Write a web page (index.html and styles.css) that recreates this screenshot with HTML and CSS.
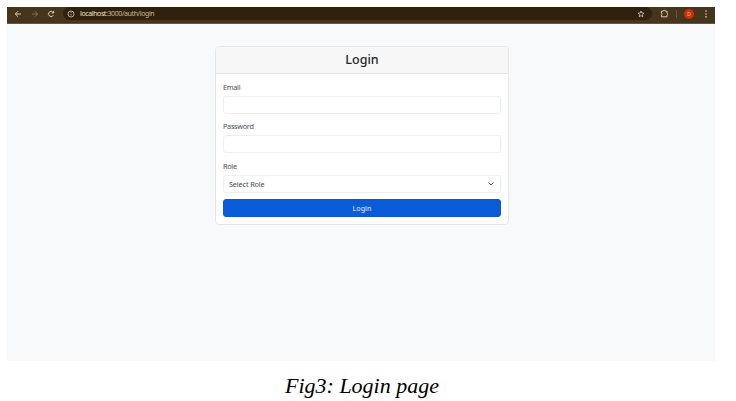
FILE: index.html
```html
<!DOCTYPE html>
<html lang="en">
<head>
<meta charset="utf-8">
<title>Login page</title>
<link rel="stylesheet" href="styles.css">
</head>
<body>
<figure class="figure">
  <div class="browser">
    <div class="toolbar">
      <svg class="nav back" viewBox="0 0 8 8"><path d="M7 4H1.3M4 1.3 1.3 4 4 6.7"/></svg>
      <svg class="nav forward" viewBox="0 0 8 8"><path d="M1 4h5.7M4 1.3 6.7 4 4 6.7"/></svg>
      <svg class="nav reload" viewBox="0 0 8 8"><path d="M6.5 5A2.6 2.6 0 1 1 6.1 2.3M6.7 1v2H4.7"/></svg>
      <div class="address">
        <svg class="info" viewBox="0 0 8 8"><circle cx="4" cy="4" r="3"/><path d="M4 3.7v1.8M4 2.2v.8"/></svg>
        <span class="url"><span class="host">localhost</span>:3000/auth/login</span>
        <svg class="star" viewBox="0 0 8 8"><path d="M4 1l.85 2 2.15.15L5.35 4.6l.5 2.15L4 5.6 2.15 6.75l.5-2.15L1 3.15 3.15 3z"/></svg>
      </div>
      <svg class="puzzle" viewBox="0 0 9 9"><path d="M1.4 2.2h1.8a1 1 0 0 1 2 0H7v1.9a1 1 0 0 1 0 1.9v1.8H1.4V6a1 1 0 0 0 0-1.9z"/></svg>
      <span class="divider"></span>
      <span class="avatar">D</span>
      <svg class="menu" viewBox="0 0 4 8"><circle cx="2" cy="1.1" r=".8"/><circle cx="2" cy="4" r=".8"/><circle cx="2" cy="6.9" r=".8"/></svg>
    </div>
    <main class="page">
      <form class="card">
        <h1 class="card-header">Login</h1>
        <div class="card-body">
          <label class="label" for="email">Email</label>
          <input class="control" id="email" type="email">
          <label class="label" for="password">Password</label>
          <input class="control" id="password" type="password">
          <span class="label">Role</span>
          <div class="control select">
            <span>Select Role</span>
            <svg class="chevron" viewBox="0 0 8 6"><path d="M1.6 1.6 4 4l2.4-2.4"/></svg>
          </div>
          <button class="submit" type="button">Login</button>
        </div>
      </form>
    </main>
  </div>
  <figcaption class="caption">Fig3: Login page</figcaption>
</figure>
</body>
</html>
```
FILE: styles.css
```css
* { box-sizing: border-box; }
body {
  margin: 0;
  background: #fff;
  font-family: "Noto Sans", "Open Sans", sans-serif;
  overflow: hidden;
}
.figure { margin: 0; padding: 7px 0 0 7px; width: 715px; }
.browser { height: 354px; background: #f8f9fb; }
.toolbar {
  display: flex;
  align-items: center;
  height: 17px;
  padding: 0 7px 3px 7px;
  background: #46341c;
  border-bottom: 1px solid #66563e;
}
svg { display: block; flex: none; fill: none; stroke: #d8cbb0; stroke-width: 1; }
.nav { width: 8px; height: 8px; }
.forward { margin-left: 9px; stroke: #84745a; }
.reload { margin-left: 8px; }
.address {
  display: flex;
  align-items: center;
  width: 589px;
  height: 13px;
  margin-left: 8px;
  padding: 0 7px 0 4px;
  border-radius: 7px;
  background: #2f210c;
}
.info { width: 8px; height: 8px; stroke-width: .8; }
.url {
  flex: 1;
  margin-left: 5px;
  font-size: 7px;
  line-height: 12px;
  letter-spacing: -.4px;
  color: #c5b99e;
}
.host { color: #eee3ca; }
.star { width: 8px; height: 8px; stroke-width: .8; }
.puzzle { width: 9px; height: 9px; margin-left: 8px; }
.divider { width: 1px; height: 8px; margin-left: 7px; background: #66543b; }
.avatar {
  width: 10px;
  height: 10px;
  margin-left: 7px;
  border-radius: 50%;
  background: #cb3009;
  color: #f3c9b4;
  font-size: 5px;
  line-height: 10px;
  text-align: center;
}
.menu { width: 4px; height: 8px; margin-left: auto; fill: #d8cbb0; stroke: none; }
.page { display: flex; justify-content: center; padding-top: 22px; }
.card {
  width: 294px;
  height: 179px;
  margin-left: 2px;
  border: 1px solid #e5e6e8;
  border-radius: 4px;
  background: #fff;
  overflow: hidden;
}
.card-header {
  height: 27px;
  margin: 0;
  border-bottom: 1px solid #e3e4e5;
  background: #f7f7f7;
  color: #24282c;
  font-size: 12.5px;
  font-weight: 500;
  line-height: 25px;
  text-align: center;
}
.card-body { padding: 7px 7px 0; }
.label {
  display: block;
  height: 13px;
  margin-bottom: 2px;
  color: #4b4f53;
  font-size: 7.3px;
  letter-spacing: -.3px;
  line-height: 13px;
}
.control {
  display: block;
  width: 100%;
  height: 18px;
  margin: 0 0 6.4px;
  padding: 0 5px;
  border: 1px solid #eceef0;
  border-radius: 3px;
  background: #fff;
  color: #45494d;
  font: 7.3px/16px "Noto Sans", sans-serif;
  letter-spacing: -.14px;
}
.select { display: flex; align-items: center; justify-content: space-between; }
.chevron { width: 8px; height: 6px; stroke: #4a4e52; }
.submit {
  display: block;
  width: 100%;
  height: 18px;
  margin: 0;
  padding: 0;
  border: 1px solid #0c58cf;
  border-radius: 3px;
  background: #0a5cd8;
  color: #e7effc;
  font: 7.2px/16px "Noto Sans", sans-serif;
}
.caption {
  margin-top: 11px;
  padding-left: 2px;
  color: #000;
  font: italic 22px/28px "Liberation Serif", serif;
  text-align: center;
}
```
